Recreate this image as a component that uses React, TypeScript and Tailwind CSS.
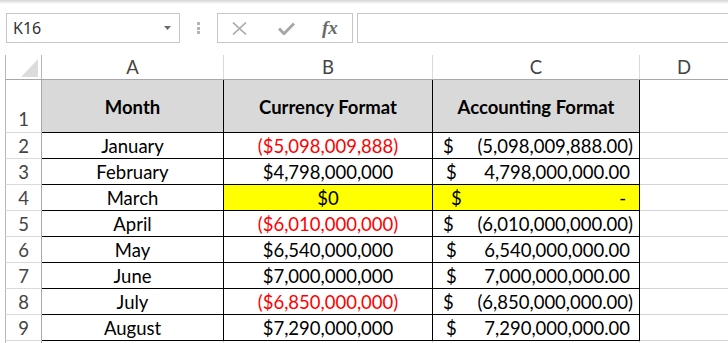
import React from "react";

type Row = {
  month: string;
  cur: string;
  kind: "neg" | "pos" | "zero";
  acc?: string;
};

const ROWS: Row[] = [
  { month: "January", cur: "($5,098,009,888)", kind: "neg", acc: "(5,098,009,888.00)" },
  { month: "February", cur: "$4,798,000,000", kind: "pos", acc: "4,798,000,000.00" },
  { month: "March", cur: "$0", kind: "zero" },
  { month: "April", cur: "($6,010,000,000)", kind: "neg", acc: "(6,010,000,000.00)" },
  { month: "May", cur: "$6,540,000,000", kind: "pos", acc: "6,540,000,000.00" },
  { month: "June", cur: "$7,000,000,000", kind: "pos", acc: "7,000,000,000.00" },
  { month: "July", cur: "($6,850,000,000)", kind: "neg", acc: "(6,850,000,000.00)" },
  { month: "August", cur: "$7,290,000,000", kind: "pos", acc: "7,290,000,000.00" },
];

const font = { fontFamily: "Lato, 'Noto Sans', sans-serif" };

function FormulaBar() {
  return (
    <div className="flex h-[30px] items-stretch" style={{ fontFamily: "'Noto Sans', 'Liberation Sans', sans-serif" }}>
      <div className="ml-[6px] flex w-[174px] items-center justify-between border border-[#c6c6c6] bg-white pl-[6px] pr-[8px]">
        <span className="text-[16px] text-[#333]">K16</span>
        <svg width="7" height="4" viewBox="0 0 7 4">
          <path d="M0 0h7L3.5 4z" fill="#6b6b6b" />
        </svg>
      </div>
      <div className="flex w-[37px] flex-col items-center justify-center gap-[1.5px]">
        <span className="h-[3px] w-[3px] bg-[#b4b4b4]" />
        <span className="h-[3px] w-[3px] bg-[#b4b4b4]" />
        <span className="h-[3px] w-[3px] bg-[#b4b4b4]" />
      </div>
      <div className="flex w-[136px] items-center border border-[#c6c6c6] bg-white">
        <svg className="ml-[14px]" width="15" height="13" viewBox="0 0 15 13">
          <path d="M1 0.5l13 12M14 0.5l-13 12" stroke="#a8a8a8" strokeWidth="1.6" fill="none" />
        </svg>
        <svg className="ml-[31px]" width="17" height="13" viewBox="0 0 17 13">
          <path d="M1 6.5l5 5.2L16 1.5" stroke="#a8a8a8" strokeWidth="3" fill="none" />
        </svg>
        <span
          className="ml-[27px] text-[19px] font-bold italic text-[#6a6a6a]"
          style={{ fontFamily: "'Liberation Serif', serif" }}
        >
          fx
        </span>
      </div>
      <div className="ml-[4px] flex-1 border border-r-0 border-[#c6c6c6] bg-white" />
    </div>
  );
}

function Acc({ row }: { row: Row }) {
  if (row.kind === "zero") {
    return (
      <div className="flex h-full items-center justify-between bg-[#ffff00] pl-[18px] pr-[13px]">
        <span>$</span>
        <span>-</span>
      </div>
    );
  }
  return (
    <div
      className={`flex h-full items-center justify-between ${
        row.kind === "neg" ? "pl-[10px] pr-[6px]" : "pl-[13px] pr-[9px]"
      }`}
    >
      <span>$</span>
      <span>{row.acc}</span>
    </div>
  );
}

export default function App() {
  return (
    <div className="h-[343px] w-[728px] overflow-hidden bg-white text-black">
      <div className="h-[4px] bg-gradient-to-b from-[#d4d4d4] to-white" />
      <div className="pt-[9px]">
        <FormulaBar />
      </div>

      <div className="mt-[12px] pl-[5px] text-[18.5px]" style={font}>
        {/* column headers */}
        <div className="flex h-[25px] border-b border-[#a8a8a8] text-[#444]">
          <div className="relative w-[37px] shrink-0 border-l border-r border-[#b8b8b8]">
            <svg className="absolute bottom-[2px] right-[3px]" width="17" height="18" viewBox="0 0 17 18">
              <path d="M17 0V18H0z" fill="#dcdcdc" />
            </svg>
          </div>
          <div className="flex w-[182px] shrink-0 items-center justify-center border-r border-[#dadada] leading-[24px]">A</div>
          <div className="flex w-[209px] shrink-0 items-center justify-center border-r border-[#dadada] leading-[24px]">B</div>
          <div className="flex w-[207px] shrink-0 items-center justify-center border-r border-[#dadada] leading-[24px]">C</div>
          <div className="flex w-[88px] shrink-0 items-center justify-center leading-[24px]">D</div>
        </div>

        {/* row 1 */}
        <div className="flex h-[53px]">
          <div className="flex w-[37px] shrink-0 items-end justify-center border-b border-l border-r border-b-[#dadada] border-l-[#b8b8b8] border-r-[#a8a8a8] pb-[1px] leading-[24px] text-[#444]">
            1
          </div>
          <div className="flex w-[182px] shrink-0 items-center justify-center border-b border-r border-black bg-[#d9d9d9] pt-[4px] font-bold">
            Month
          </div>
          <div className="flex w-[209px] shrink-0 items-center justify-center border-b border-r border-black bg-[#d9d9d9] pt-[4px] font-bold">
            Currency Format
          </div>
          <div className="flex w-[207px] shrink-0 items-center justify-center border-b border-r border-black bg-[#d9d9d9] pt-[4px] font-bold">
            Accounting Format
          </div>
          <div className="w-[88px] shrink-0 border-b border-[#d4d4d4]" />
        </div>

        {ROWS.map((r, i) => (
          <div key={r.month} className="flex h-[26px] leading-[26px]">
            <div className="flex w-[37px] shrink-0 items-center justify-center border-b border-l border-r border-b-[#dadada] border-l-[#b8b8b8] border-r-[#a8a8a8] text-[#444]">
              {i + 2}
            </div>
            <div className="flex w-[182px] shrink-0 items-center justify-center border-b border-r border-black">
              {r.month}
            </div>
            <div
              className={`flex w-[209px] shrink-0 items-center justify-center border-b border-r border-black ${
                r.kind === "zero" ? "bg-[#ffff00]" : ""
              } ${r.kind === "neg" ? "text-[#ff0000]" : ""}`}
            >
              {r.cur}
            </div>
            <div className="w-[207px] shrink-0 border-b border-r border-black">
              <Acc row={r} />
            </div>
            <div className="w-[88px] shrink-0 border-b border-[#d4d4d4]" />
          </div>
        ))}
        <div className="flex h-[10px]">
          <div className="w-[37px] shrink-0 border-l border-r border-l-[#b8b8b8] border-r-[#a8a8a8]" />
          <div className="w-[182px] shrink-0 border-r border-[#d4d4d4]" />
          <div className="w-[209px] shrink-0 border-r border-[#d4d4d4]" />
          <div className="w-[207px] shrink-0 border-r border-[#d4d4d4]" />
        </div>
      </div>
    </div>
  );
}
